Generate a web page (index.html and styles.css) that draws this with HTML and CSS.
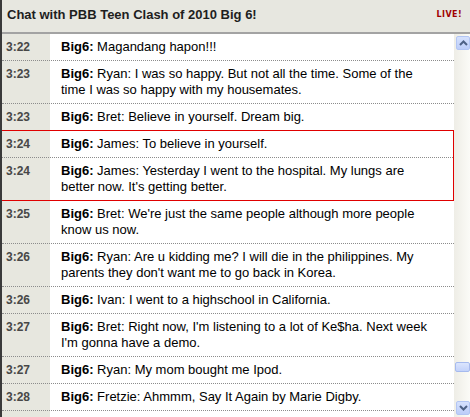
FILE: index.html
```html
<!DOCTYPE html>
<html>
<head>
<meta charset="utf-8">
<link rel="stylesheet" href="styles.css">
</head>
<body>
<div class="app">
  <div class="header">
    <div class="title">Chat with PBB Teen Clash of 2010 Big 6!</div>
    <div class="live">LIVE!</div>
  </div>
  <div class="body">
    <div class="list">
      <div class="row"><div class="time">3:22</div><div class="msg"><b>Big6:</b> Magandang hapon!!!</div></div>
      <div class="row"><div class="time">3:23</div><div class="msg"><b>Big6:</b> Ryan: I was so happy. But not all the time. Some of the<br>time I was so happy with my housemates.</div></div>
      <div class="row"><div class="time">3:23</div><div class="msg"><b>Big6:</b> Bret: Believe in yourself. Dream big.</div></div>
      <div class="group">
        <div class="row"><div class="time">3:24</div><div class="msg"><b>Big6:</b> James: To believe in yourself.</div></div>
        <div class="row"><div class="time">3:24</div><div class="msg"><b>Big6:</b> James: Yesterday I went to the hospital. My lungs are<br>better now. It's getting better.</div></div>
      </div>
      <div class="row"><div class="time">3:25</div><div class="msg"><b>Big6:</b> Bret: We're just the same people although more people<br>know us now.</div></div>
      <div class="row"><div class="time">3:26</div><div class="msg"><b>Big6:</b> Ryan: Are u kidding me? I will die in the philippines. My<br>parents they don't want me to go back in Korea.</div></div>
      <div class="row"><div class="time">3:26</div><div class="msg"><b>Big6:</b> Ivan: I went to a highschool in California.</div></div>
      <div class="row"><div class="time">3:27</div><div class="msg"><b>Big6:</b> Bret: Right now, I'm listening to a lot of Ke$ha. Next week<br>I'm gonna have a demo.</div></div>
      <div class="row"><div class="time">3:27</div><div class="msg"><b>Big6:</b> Ryan: My mom bought me Ipod.</div></div>
      <div class="row"><div class="time">3:28</div><div class="msg"><b>Big6:</b> Fretzie: Ahmmm, Say It Again by Marie Digby.</div></div>
    </div>
    <div class="scrollbar">
      <div class="sbtn"><svg width="9" height="6" viewBox="0 0 9 6"><path d="M1 5 L4.5 1.5 L8 5" fill="none" stroke="#4d6185" stroke-width="2"/></svg></div>
      <div class="track"><div class="thumb"></div></div>
      <div class="sbtn"><svg width="9" height="6" viewBox="0 0 9 6"><path d="M1 1 L4.5 4.5 L8 1" fill="none" stroke="#4d6185" stroke-width="2"/></svg></div>
    </div>
  </div>
</div>
</body>
</html>
```
FILE: styles.css
```css
html, body { margin: 0; padding: 0; }
body {
  width: 470px;
  height: 417px;
  overflow: hidden;
  font-family: "Liberation Sans", Arial, sans-serif;
  background: #fff;
}
.app {
  height: 417px;
  border-left: 2px solid #3a3a3a;
  display: flex;
  flex-direction: column;
  box-sizing: border-box;
}
.header {
  flex: none;
  background: #e7e7e0;
  border-bottom: 2px solid #a3a3a3;
  display: flex;
  justify-content: space-between;
  align-items: flex-start;
  padding: 7px 8px 0 5px;
  height: 25px;
}
.title {
  font-size: 13px;
  font-weight: bold;
  line-height: 16px;
  color: #1e1e1e;
}
.live {
  font-family: "DejaVu Sans", Verdana, sans-serif;
  font-size: 8px;
  font-weight: bold;
  letter-spacing: 0.4px;
  line-height: 9px;
  color: #a00000;
  margin-top: 3px;
}
.body {
  flex: 1;
  display: flex;
  min-height: 0;
}
.list {
  flex: 1;
  overflow: hidden;
  background: linear-gradient(to right, #e7e7df 0 48px, #fff 48px);
}
.row {
  display: flex;
  border-bottom: 1px dotted #8c8c8c;
  padding: 5px 0;
  font-size: 13px;
  line-height: 16px;
}
.time {
  width: 48px;
  flex: none;
  box-sizing: border-box;
  padding-left: 4px;
  font-weight: bold;
  font-size: 12px;
  color: #474747;
}
.msg {
  padding-left: 11px;
  color: #000;
  white-space: nowrap;
}
.group {
  border: 1px solid #e00000;
  margin-left: -1px;
  margin-top: -1px;
}
.group .row:last-child { border-bottom: none; }
.scrollbar {
  width: 16px;
  flex: none;
  display: flex;
  flex-direction: column;
  align-items: flex-end;
  background: linear-gradient(to right, #eeede6, #fbfbf7);
}
.sbtn {
  width: 14px;
  height: 14px;
  margin: 2px 0;
  box-sizing: border-box;
  border: 1px solid #b2c5f3;
  border-radius: 2px;
  background: linear-gradient(#d5e1fd, #bccdf9);
  display: flex;
  align-items: center;
  justify-content: center;
}
.track {
  flex: 1;
  width: 16px;
  display: flex;
  flex-direction: column;
}
.thumb {
  margin-top: 310px;
  margin-left: 1px;
  height: 10px;
  box-sizing: border-box;
  border: 1px solid #a6baee;
  border-radius: 2px;
  background: linear-gradient(#dbe5fd, #c3d2fa);
}
```
